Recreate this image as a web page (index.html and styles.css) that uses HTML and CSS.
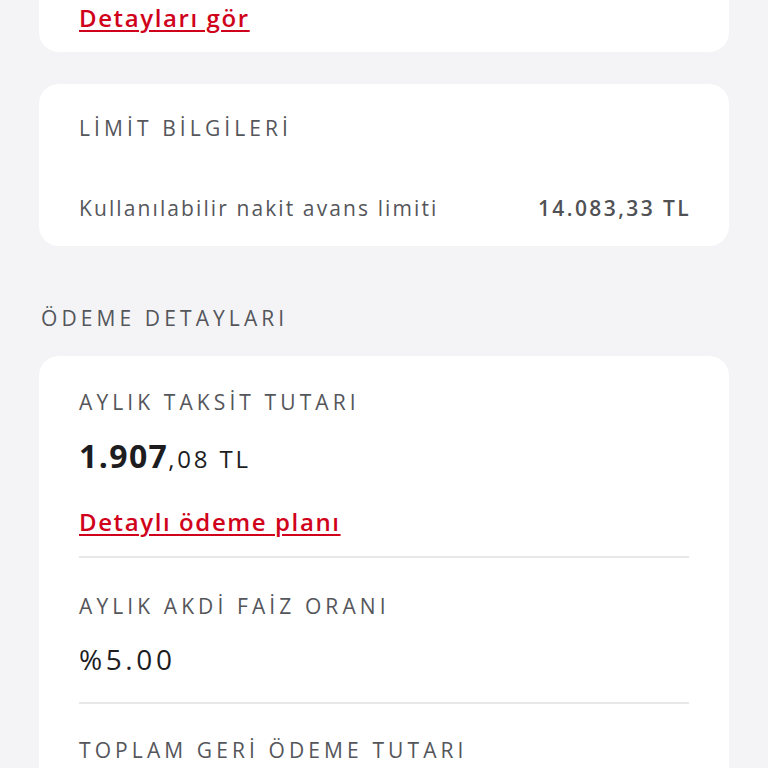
FILE: index.html
```html
<!DOCTYPE html>
<html lang="tr">
<head>
<meta charset="utf-8">
<link rel="stylesheet" href="styles.css">
</head>
<body>
<div class="page">
  <section class="card card-top">
    <a class="link" href="#">Detayları gör</a>
  </section>

  <section class="card card-limit">
    <h2 class="label">LİMİT BİLGİLERİ</h2>
    <div class="row">
      <span class="row-name">Kullanılabilir nakit avans limiti</span>
      <span class="row-value">14.083,33 TL</span>
    </div>
  </section>

  <h2 class="section-title">ÖDEME DETAYLARI</h2>

  <section class="card card-pay">
    <div class="item">
      <h3 class="label">AYLIK TAKSİT TUTARI</h3>
      <div class="amount"><span class="big">1.907</span><span class="small">,08 TL</span></div>
      <a class="link" href="#">Detaylı ödeme planı</a>
    </div>
    <div class="item item-rate">
      <h3 class="label">AYLIK AKDİ FAİZ ORANI</h3>
      <div class="rate">%5.00</div>
    </div>
    <div class="item last">
      <h3 class="label">TOPLAM GERİ ÖDEME TUTARI</h3>
    </div>
  </section>
</div>
</body>
</html>
```

FILE: styles.css
```css
* { box-sizing: border-box; }
html, body { margin: 0; padding: 0; }
body {
  background: #f4f4f6;
  font-family: "Open Sans", "Noto Sans", sans-serif;
  color: #222;
  height: 768px;
  overflow: hidden;
}
.page {
  padding: 0 39px;
  display: flex;
  flex-direction: column;
  margin-top: -40px;
}
.card {
  background: #fff;
  border-radius: 20px;
  padding: 0 40px;
}
.card-top {
  padding-top: 44px;
  height: 92px;
}
.link {
  color: #d0021b;
  font-size: 24px;
  font-weight: 600;
  letter-spacing: 1.6px;
  text-decoration: underline;
  text-decoration-thickness: 2px;
  text-underline-offset: 3px;
  line-height: 28px;
  display: inline-block;
}
.card-limit {
  margin-top: 32px;
  height: 162px;
  padding-top: 32px;
}
.label {
  margin: 0;
  font-size: 21px;
  font-weight: 500;
  letter-spacing: 4.1px;
  color: #55565b;
  line-height: 24px;
}
.row {
  display: flex;
  justify-content: space-between;
  align-items: baseline;
  margin-top: 56px;
  font-size: 21px;
  color: #55565b;
  line-height: 24px;
}
.row-name { letter-spacing: 2.1px; }
.row-value { font-weight: 600; letter-spacing: 2.4px; color: #505155; margin-right: -2px; }
.section-title {
  margin: 60px 0 0 2px;
  font-size: 21px;
  font-weight: 500;
  letter-spacing: 4.1px;
  color: #55565b;
  line-height: 24px;
}
.card-pay {
  margin-top: 26px;
  padding-top: 34px;
  height: 460px;
}
.item {
  border-bottom: 2px solid #e8e8ea;
  padding-bottom: 20px;
}
.item + .item { padding-top: 36px; }
.item-rate { padding-bottom: 23px; }
.item.last { border-bottom: none; padding-top: 34px; }
.amount {
  margin-top: 22px;
  color: #1d1d1f;
  line-height: 40px;
}
.big { font-size: 32px; font-weight: 700; letter-spacing: 1.4px; }
.small { font-size: 24px; font-weight: 500; letter-spacing: 2.8px; }
.amount + .link { margin-top: 26px; }
.rate {
  margin-top: 21px;
  font-size: 28px;
  font-weight: 500;
  color: #1d1d1f;
  line-height: 40px;
  letter-spacing: 3.6px;
}
```
